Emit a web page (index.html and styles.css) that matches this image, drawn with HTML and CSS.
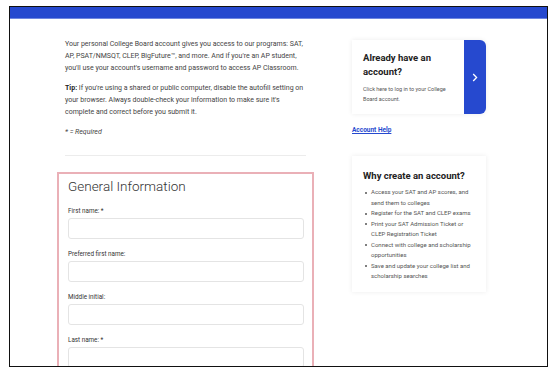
FILE: index.html
```html
<!DOCTYPE html>
<html>
<head lang="en">
    <meta charset="UTF-8">
    <title>Create Account</title>
    <link rel="stylesheet" href="styles.css">
</head>
<body>
    <div id="frame">
        <div class="topbar"></div>
        <div class="main">
            <div class="left">
                <div class="intro">
                    <p>Your personal College Board account gives you access to our programs: SAT, AP, PSAT/NMSQT, CLEP, BigFuture&trade;, and more. And if you're an AP student, you'll use your account's username and password to access AP Classroom.</p>
                    <p><strong>Tip:</strong> If you're using a shared or public computer, disable the autofill setting on your browser. Always double-check your information to make sure it's complete and correct before you submit it.</p>
                    <p class="required">* = Required</p>
                </div>
                <div class="form-box">
                    <h2>General Information</h2>
                    <label>First name: *</label>
                    <div class="input"></div>
                    <label>Preferred first name:</label>
                    <div class="input"></div>
                    <label>Middle initial:</label>
                    <div class="input"></div>
                    <label>Last name: *</label>
                    <div class="input"></div>
                </div>
            </div>
            <div class="right">
                <div class="login-card">
                    <div class="login-text">
                        <h3>Already have an account?</h3>
                        <p>Click here to log in to your College Board account.</p>
                    </div>
                    <div class="login-arrow">
                        <svg width="6" height="9" viewBox="0 0 6 9"><path d="M1.2 1 L4.6 4.5 L1.2 8" fill="none" stroke="#fff" stroke-width="1.3"/></svg>
                    </div>
                </div>
                <a href="#" class="help">Account Help</a>
                <div class="why-card">
                    <h3>Why create an account?</h3>
                    <ul>
                        <li>Access your SAT and AP scores, and send them to colleges</li>
                        <li>Register for the SAT and CLEP exams</li>
                        <li>Print your SAT Admission Ticket or CLEP Registration Ticket</li>
                        <li>Connect with college and scholarship opportunities</li>
                        <li>Save and update your college list and scholarship searches</li>
                    </ul>
                </div>
            </div>
        </div>
    </div>
</body>
</html>
```

FILE: styles.css
```css
*{
    margin: 0;
    padding: 0;
    box-sizing: border-box;
}
body{
    background: #fff;
    font-family: Roboto, "Liberation Sans", sans-serif;
    color: #333;
}
ul{
    list-style: none;
}
#frame{
    margin: 6px 0 0 9px;
    width: 539px;
    height: 361px;
    border: 1.5px solid #111;
    overflow: hidden;
    background: #fff;
}
.topbar{
    height: 12px;
    background: #2649cf;
    border-bottom: 1px solid #6f86e0;
}
.main{
    display: flex;
    padding-left: 47px;
}
.left{
    width: 257px;
}
.intro{
    margin: 0 8px;
    padding: 19px 0 17px;
    font-size: 7px;
    line-height: 12px;
    color: #444;
    border-bottom: 1px solid #ececec;
}
.intro p{
    margin-bottom: 8px;
}
.intro strong{
    color: #222;
}
.intro .required{
    font-style: italic;
    margin-bottom: 0;
}
.form-box{
    margin-top: 16px;
    border: 2px solid #eab0b7;
    padding: 3px 8px 10px 9px;
}
.form-box h2{
    font-size: 13.5px;
    font-weight: 300;
    color: #333;
    line-height: 18px;
    margin-bottom: 12px;
}
.form-box label{
    display: block;
    font-size: 6.3px;
    line-height: 8px;
    color: #333;
    margin-bottom: 3px;
}
.form-box .input{
    height: 21px;
    border: 1px solid #e4e4e4;
    border-radius: 3px;
    margin-bottom: 11px;
}
.right{
    margin-left: 38px;
    width: 134px;
    padding-top: 21px;
}
.login-card{
    display: flex;
    height: 74px;
    border-radius: 0 6px 6px 0;
    box-shadow: 0 0 5px rgba(0,0,0,0.08);
    background: #fff;
}
.login-text{
    flex: 1;
    padding: 11px 8px 0 11px;
}
.login-text h3{
    font-size: 9.5px;
    font-weight: 700;
    color: #222;
    line-height: 14px;
    margin-bottom: 5px;
}
.login-text p{
    font-size: 5.5px;
    line-height: 10px;
    color: #555;
}
.login-arrow{
    width: 22px;
    background: #2649cf;
    border-radius: 0 6px 6px 0;
    display: flex;
    align-items: center;
    justify-content: center;
}
.help{
    display: inline-block;
    margin-top: 12px;
    font-size: 6.5px;
    font-weight: 700;
    color: #2649cf;
    text-decoration: underline;
}
.why-card{
    margin-top: 20px;
    height: 136px;
    padding: 13px 10px 0 11px;
    box-shadow: 0 0 5px rgba(0,0,0,0.08);
    background: #fff;
}
.why-card h3{
    font-size: 9.5px;
    font-weight: 700;
    color: #222;
    line-height: 14px;
    margin-bottom: 4px;
}
.why-card li{
    position: relative;
    padding-left: 8px;
    font-size: 6px;
    line-height: 10.5px;
    color: #555;
}
.why-card li::before{
    content: "";
    position: absolute;
    left: 2px;
    top: 4.5px;
    width: 2px;
    height: 2px;
    border-radius: 1px;
    background: #555;
}
```
